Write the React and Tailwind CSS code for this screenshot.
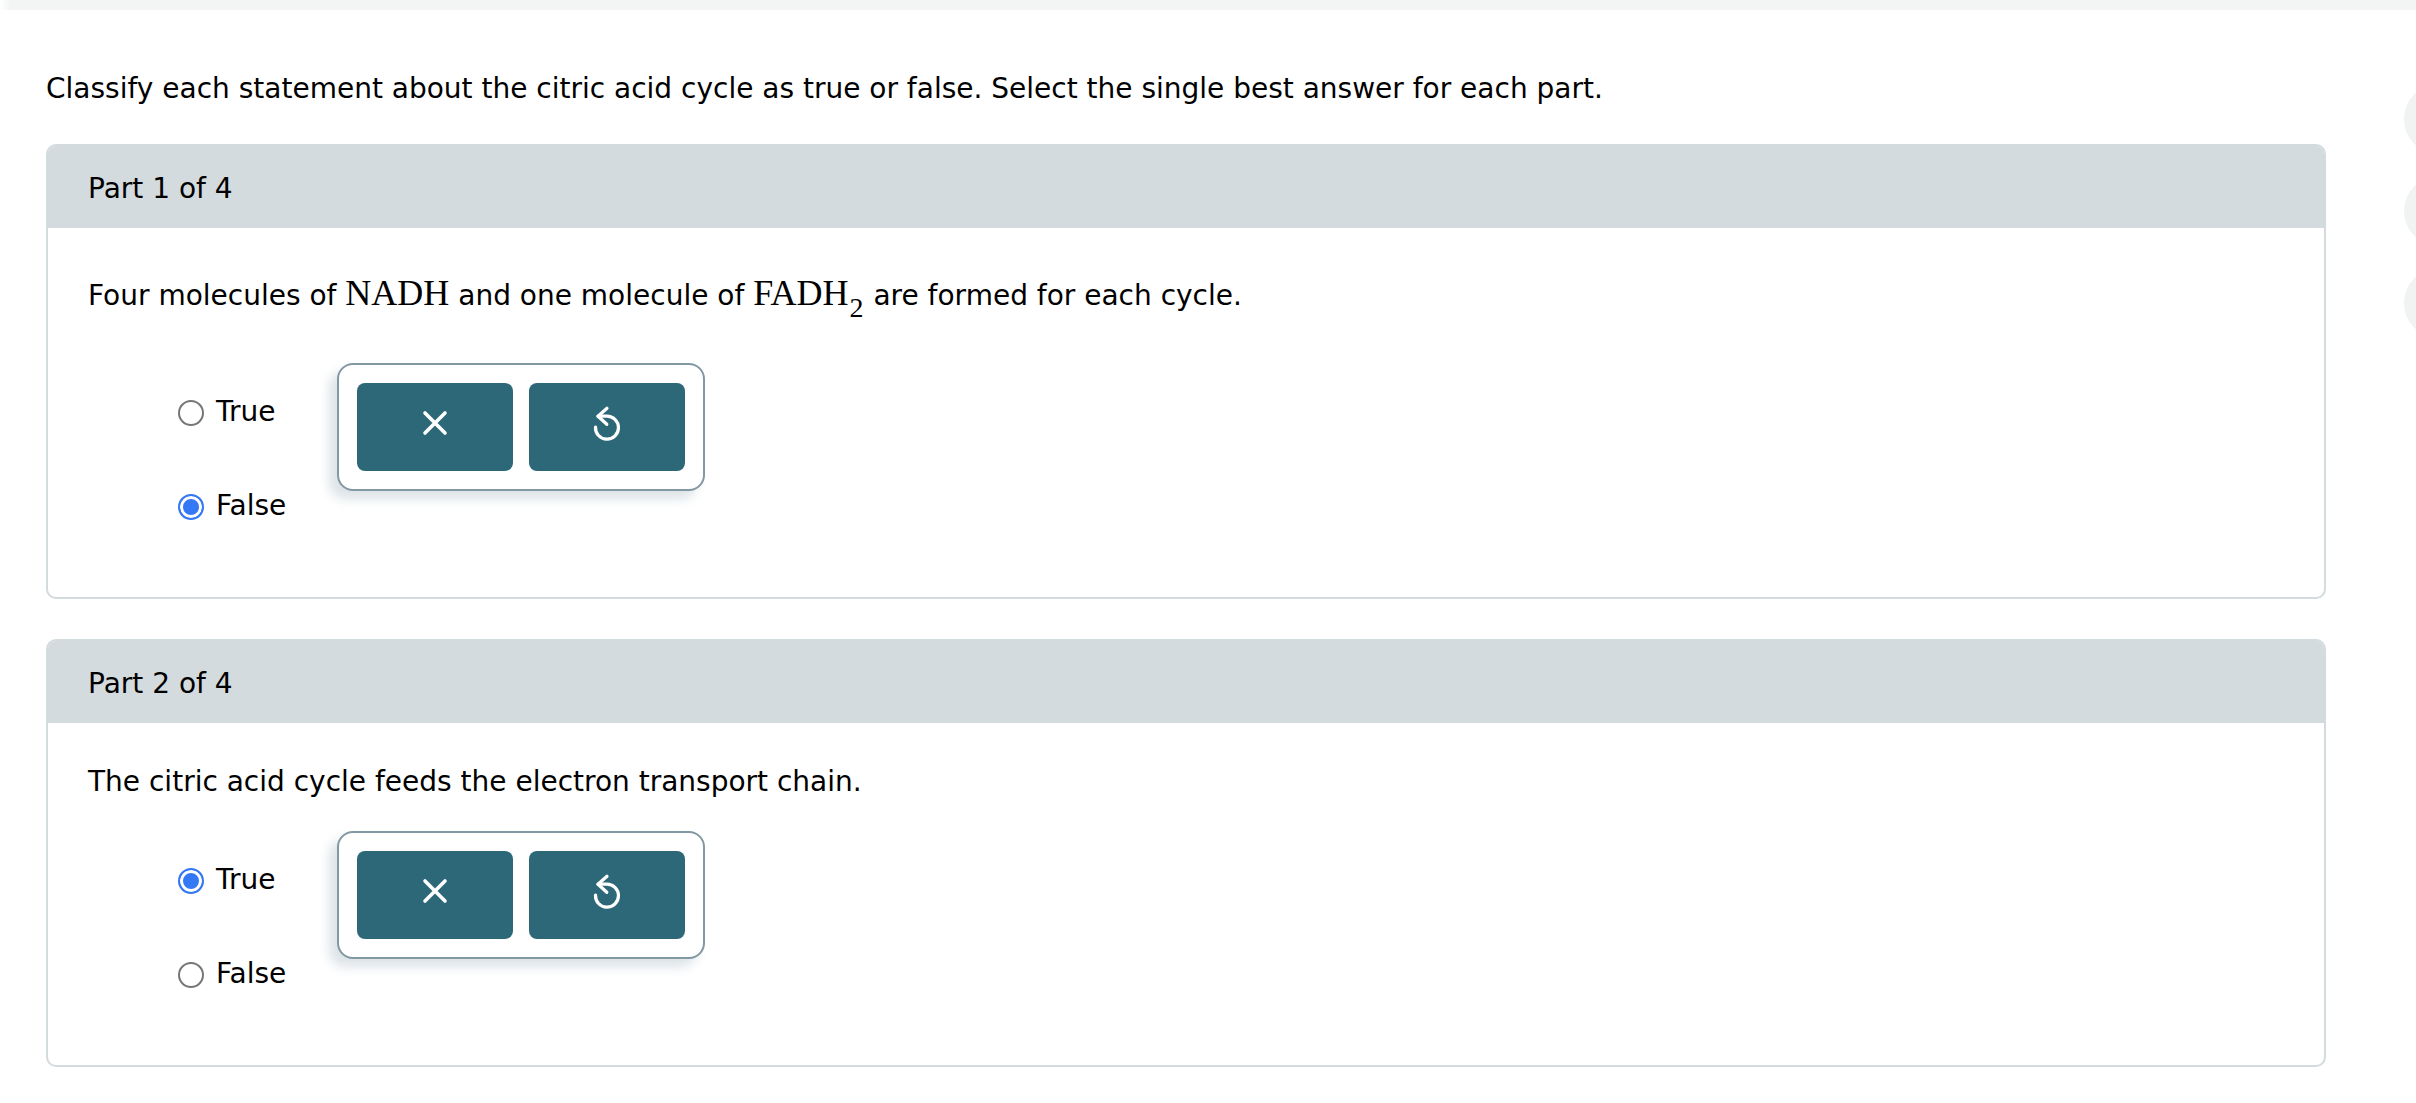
import React, { useState } from "react";

const CloseIcon = () => (
  <svg width="36" height="36" viewBox="0 0 36 36" fill="none" stroke="currentColor" strokeWidth="3.6" strokeLinecap="round">
    <path d="M8 8 L28 28 M28 8 L8 28" />
  </svg>
);

const ResetIcon = () => (
  <svg width="36" height="36" viewBox="0 0 36 36" fill="none" stroke="currentColor" strokeWidth="3.2" strokeLinecap="round" strokeLinejoin="round">
    <path d="M6.5 22 A11.5 11.5 0 1 0 17.5 11.2 L9 11.2" />
    <path d="M18 3.2 L9 11.2 L17.8 19.3" />
  </svg>
);

const ToolButton = ({ label, onClick, children }) => (
  <button
    type="button"
    aria-label={label}
    onClick={onClick}
    className="flex h-22 w-39 items-center justify-center rounded-lg bg-[#2d6879] pb-2 text-white"
  >
    {children}
  </button>
);

const Formula = ({ children }) => (
  <span className="font-['Liberation_Serif',serif] text-[36px] leading-none">{children}</span>
);

const Choice = ({ name, label, checked, onChange }) => (
  <label className="flex items-center gap-3 leading-8">
    <input
      type="radio"
      name={name}
      checked={checked}
      onChange={onChange}
      className="mt-0.5 size-[26px] shrink-0 appearance-none rounded-full border-2 border-[#767676] bg-white checked:border-[#3478f6] checked:bg-[#3478f6] checked:shadow-[inset_0_0_0_3px_#fff]"
    />
    {label}
  </label>
);

const Part = ({ id, title, initial, children }) => {
  const [answer, setAnswer] = useState(initial);

  return (
    <section className="overflow-hidden rounded-[10px] border-2 border-[#d3dbde]">
      <h2 className="bg-[#d3dbde] px-10 pt-[27px] pb-[23px] leading-8">{title}</h2>
      <div className="px-10 pt-[43px] pb-[75px]">
        {children}
        <div className="mt-[33px] flex items-start pl-[90px]">
          <div className="flex w-[159px] flex-col gap-[62px] pt-[33px]">
            <Choice name={id} label="True" checked={answer === "true"} onChange={() => setAnswer("true")} />
            <Choice name={id} label="False" checked={answer === "false"} onChange={() => setAnswer("false")} />
          </div>
          <div className="flex gap-4 rounded-2xl border-2 border-[#8299a3] bg-white p-[18px] shadow-[-8px_8px_12px_#dde3e7]">
            <ToolButton label="Clear" onClick={() => setAnswer(null)}>
              <CloseIcon />
            </ToolButton>
            <ToolButton label="Reset" onClick={() => setAnswer(initial)}>
              <ResetIcon />
            </ToolButton>
          </div>
        </div>
      </div>
    </section>
  );
};

const App = () => {
  return (
    <div className="relative min-h-screen overflow-hidden bg-white font-['DejaVu_Sans',sans-serif] text-[28px] text-black">
      <div className="h-[10px] bg-linear-to-r from-white to-[#f3f5f5] to-[10px]" />
      <main className="mr-[90px] ml-[46px] flex flex-col pt-[63px] pb-9">
        <p className="mb-[39px] leading-8">
          Classify each statement about the citric acid cycle as true or false. Select the single best answer for each part.
        </p>
        <div className="flex flex-col gap-10">
          <Part id="part1" title="Part 1 of 4" initial="false">
            <p className="pt-1 pb-[18px] leading-8">
              Four molecules of <Formula>NADH</Formula> and one molecule of{" "}
              <Formula>
                FADH<sub className="-bottom-3 px-px text-[28px]">2</sub>
              </Formula>{" "}
              are formed for each cycle.
            </p>
          </Part>
          <Part id="part2" title="Part 2 of 4" initial="true">
            <p className="leading-8">The citric acid cycle feeds the electron transport chain.</p>
          </Part>
        </div>
      </main>
      <aside className="absolute top-[84px] -right-[58px] flex flex-col gap-[22px]">
        <div className="size-[70px] rounded-full bg-[#f1f3f3]" />
        <div className="size-[70px] rounded-full bg-[#f1f3f3]" />
        <div className="size-[70px] rounded-full bg-[#f1f3f3]" />
      </aside>
    </div>
  );
};

export default App;
